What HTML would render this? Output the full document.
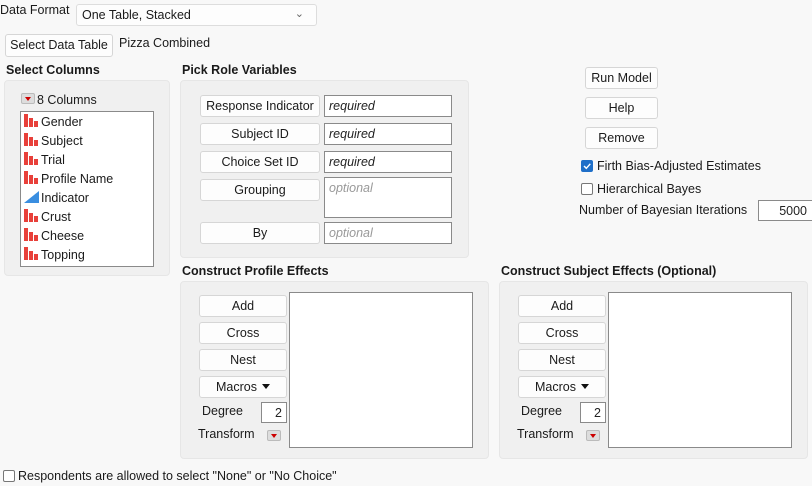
<!DOCTYPE html>
<html><head><style>
body{margin:0;width:812px;height:486px;background:#f8f8f8;font-family:"Liberation Sans",sans-serif;font-size:12.5px;color:#1a1a1a;position:relative;overflow:hidden}
.a{position:absolute;white-space:nowrap}
.b{position:absolute;background:#fdfdfd;border:1px solid #d6d6d6;border-radius:3px;box-sizing:border-box;text-align:center;line-height:20px}
.p{position:absolute;background:#f0f0f0;border:1px solid #e6e6e6;border-radius:4px;box-sizing:border-box}
.i{position:absolute;background:#fff;border:1px solid #8a8a8a;box-sizing:border-box;font-style:italic;padding-left:4px;line-height:21px;color:#222}
.i.o{color:#999}
.h{font-weight:bold}
.dd{position:absolute;width:14px;height:11px;background:#ddd;border:1px solid #bbb;border-radius:2px;box-sizing:border-box}
.dd:after{content:"";position:absolute;left:3px;top:3px;border-left:3.5px solid transparent;border-right:3.5px solid transparent;border-top:4px solid #c00}
.nom{display:inline-block;width:15px;height:13px;position:relative;vertical-align:-1px;margin-right:2px}
.nom i{position:absolute;bottom:0;width:3.5px;background:#e8403a}
.cb{position:absolute;width:12px;height:12px;border:1px solid #777;border-radius:2px;box-sizing:border-box;background:#fff}
.tri{display:inline-block;border-left:4px solid transparent;border-right:4px solid transparent;border-top:5px solid #111;vertical-align:2px;margin-left:5px}
</style></head><body>
<div class="a" style="left:0;top:3px">Data Format</div>
<div class="b" style="left:76px;top:4px;width:241px;height:22px;text-align:left;padding-left:5px;border-color:#ddd">One Table, Stacked<span style="position:absolute;right:12px;top:-1px;color:#666;font-size:11px">&#8964;</span></div>
<div class="b" style="left:5px;top:34px;width:108px;height:23px">Select Data Table</div>
<div class="a" style="left:119px;top:36px">Pizza Combined</div>

<div class="a h" style="left:6px;top:63px">Select Columns</div>
<div class="p" style="left:4px;top:80px;width:166px;height:196px"></div>
<div class="dd" style="left:21px;top:93px"></div>
<div class="a" style="left:37px;top:93px">8 Columns</div>
<div class="a" style="left:20px;top:111px;width:134px;height:156px;background:#fff;border:1px solid #8a8a8a;box-sizing:border-box;line-height:19px;padding-left:3px;padding-top:1px">
<div><span class="nom"><i style="left:0;height:13px"></i><i style="left:5px;height:9px"></i><i style="left:10px;height:6px"></i></span>Gender</div>
<div><span class="nom"><i style="left:0;height:13px"></i><i style="left:5px;height:9px"></i><i style="left:10px;height:6px"></i></span>Subject</div>
<div><span class="nom"><i style="left:0;height:13px"></i><i style="left:5px;height:9px"></i><i style="left:10px;height:6px"></i></span>Trial</div>
<div><span class="nom"><i style="left:0;height:13px"></i><i style="left:5px;height:9px"></i><i style="left:10px;height:6px"></i></span>Profile Name</div>
<div><svg width="15" height="12" style="vertical-align:-1px;margin-right:2px"><polygon points="0,12 15,0 15,12" fill="#3a8ee0"/></svg>Indicator</div>
<div><span class="nom"><i style="left:0;height:13px"></i><i style="left:5px;height:9px"></i><i style="left:10px;height:6px"></i></span>Crust</div>
<div><span class="nom"><i style="left:0;height:13px"></i><i style="left:5px;height:9px"></i><i style="left:10px;height:6px"></i></span>Cheese</div>
<div><span class="nom"><i style="left:0;height:13px"></i><i style="left:5px;height:9px"></i><i style="left:10px;height:6px"></i></span>Topping</div>
</div>

<div class="a h" style="left:182px;top:63px">Pick Role Variables</div>
<div class="p" style="left:180px;top:80px;width:289px;height:178px"></div>
<div class="b" style="left:200px;top:95px;width:120px;height:22px">Response Indicator</div>
<div class="b" style="left:200px;top:123px;width:120px;height:22px">Subject ID</div>
<div class="b" style="left:200px;top:151px;width:120px;height:22px">Choice Set ID</div>
<div class="b" style="left:200px;top:179px;width:120px;height:22px">Grouping</div>
<div class="b" style="left:200px;top:222px;width:120px;height:22px">By</div>
<div class="i" style="left:324px;top:95px;width:128px;height:22px">required</div>
<div class="i" style="left:324px;top:123px;width:128px;height:22px">required</div>
<div class="i" style="left:324px;top:151px;width:128px;height:22px">required</div>
<div class="i o" style="left:324px;top:177px;width:128px;height:41px">optional</div>
<div class="i o" style="left:324px;top:222px;width:128px;height:22px">optional</div>

<div class="b" style="left:585px;top:67px;width:73px;height:22px">Run Model</div>
<div class="b" style="left:585px;top:97px;width:73px;height:22px">Help</div>
<div class="b" style="left:585px;top:127px;width:73px;height:22px">Remove</div>
<div class="cb" style="left:581px;top:160px;background:#1f6fc8;border-color:#1f6fc8"><svg width="10" height="10" style="position:absolute;left:0;top:0"><path d="M2 5 L4.3 7.3 L8.3 2.8" stroke="#fff" stroke-width="1.4" fill="none"/></svg></div>
<div class="a" style="left:597px;top:159px">Firth Bias-Adjusted Estimates</div>
<div class="cb" style="left:581px;top:183px"></div>
<div class="a" style="left:597px;top:182px">Hierarchical Bayes</div>
<div class="a" style="left:579px;top:203px">Number of Bayesian Iterations</div>
<div class="i" style="left:758px;top:200px;width:56px;height:21px;font-style:normal;text-align:right;padding-right:6px;line-height:20px">5000</div>

<div class="a h" style="left:182px;top:264px">Construct Profile Effects</div>
<div class="p" style="left:180px;top:281px;width:309px;height:178px"></div>
<div class="b" style="left:199px;top:295px;width:88px;height:22px">Add</div>
<div class="b" style="left:199px;top:322px;width:88px;height:22px">Cross</div>
<div class="b" style="left:199px;top:349px;width:88px;height:22px">Nest</div>
<div class="b" style="left:199px;top:376px;width:88px;height:22px">Macros<span class="tri"></span></div>
<div class="a" style="left:202px;top:404px">Degree</div>
<div class="i" style="left:261px;top:402px;width:26px;height:21px;font-style:normal;text-align:right;padding-right:4px;line-height:20px">2</div>
<div class="a" style="left:198px;top:427px">Transform</div>
<div class="dd" style="left:267px;top:430px"></div>
<div class="a" style="left:289px;top:292px;width:184px;height:156px;background:#fff;border:1px solid #8a8a8a;box-sizing:border-box"></div>

<div class="a h" style="left:501px;top:264px">Construct Subject Effects (Optional)</div>
<div class="p" style="left:499px;top:281px;width:309px;height:178px"></div>
<div class="b" style="left:518px;top:295px;width:88px;height:22px">Add</div>
<div class="b" style="left:518px;top:322px;width:88px;height:22px">Cross</div>
<div class="b" style="left:518px;top:349px;width:88px;height:22px">Nest</div>
<div class="b" style="left:518px;top:376px;width:88px;height:22px">Macros<span class="tri"></span></div>
<div class="a" style="left:521px;top:404px">Degree</div>
<div class="i" style="left:580px;top:402px;width:26px;height:21px;font-style:normal;text-align:right;padding-right:4px;line-height:20px">2</div>
<div class="a" style="left:517px;top:427px">Transform</div>
<div class="dd" style="left:586px;top:430px"></div>
<div class="a" style="left:608px;top:292px;width:184px;height:156px;background:#fff;border:1px solid #8a8a8a;box-sizing:border-box"></div>

<div class="cb" style="left:3px;top:470px"></div>
<div class="a" style="left:18px;top:469px">Respondents are allowed to select "None" or "No Choice"</div>
</body></html>
